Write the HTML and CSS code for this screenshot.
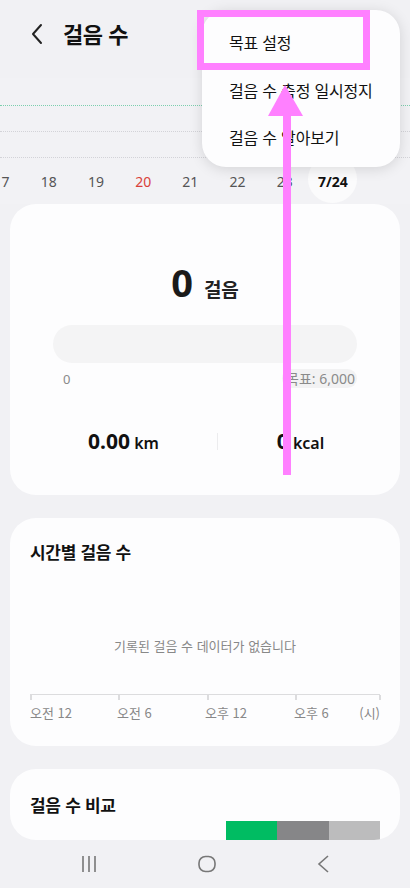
FILE: index.html
```html
<!DOCTYPE html>
<html lang="ko">
<head>
    <meta charset="UTF-8">
    <title>걸음 수</title>
    <link rel="stylesheet" href="styles.css">
</head>
<body>
<div class="page">
    <div class="header">
        <svg class="back" width="14" height="22" viewBox="0 0 14 22"><path d="M11 2 L3 11 L11 20" fill="none" stroke="#222" stroke-width="2" stroke-linecap="round" stroke-linejoin="round"/></svg>
        <h1 class="title">걸음 수</h1>
    </div>

    <div class="graph">
        <div class="line goal"></div>
        <div class="line"></div>
        <div class="line"></div>
    </div>

    <ul class="days">
        <li>17</li>
        <li>18</li>
        <li>19</li>
        <li class="sun">20</li>
        <li>21</li>
        <li>22</li>
        <li>23</li>
        <li class="today"><span>7/24</span></li>
    </ul>

    <div class="card summary">
        <div class="count"><b>0</b><span>걸음</span></div>
        <div class="bar"></div>
        <div class="bar-labels">
            <span>0</span>
            <span class="goal-pill">목표: 6,000</span>
        </div>
        <div class="stats">
            <div class="stat"><b>0.00</b> <span>km</span></div>
            <div class="sep"></div>
            <div class="stat"><b>0</b> <span>kcal</span></div>
        </div>
    </div>

    <div class="card hourly">
        <h2>시간별 걸음 수</h2>
        <p class="empty">기록된 걸음 수 데이터가 없습니다</p>
        <div class="axis">
            <i style="left:0"></i>
            <i style="left:88px"></i>
            <i style="left:177px"></i>
            <i style="left:265px"></i>
            <i style="left:349px"></i>
        </div>
        <div class="axis-labels">
            <span>오전 12</span>
            <span>오전 6</span>
            <span>오후 12</span>
            <span>오후 6</span>
            <span>(시)</span>
        </div>
    </div>

    <div class="card compare">
        <h2>걸음 수 비교</h2>
        <div class="legend">
            <span class="c1"></span><span class="c2"></span><span class="c3"></span>
        </div>
    </div>

    <div class="navbar">
        <svg width="18" height="18" viewBox="0 0 18 18"><path d="M3 1v16M9 1v16M15 1v16" stroke="#777" stroke-width="1.6"/></svg>
        <svg width="18" height="18" viewBox="0 0 18 18"><rect x="1" y="1.5" width="16" height="15" rx="6.5" fill="none" stroke="#777" stroke-width="1.6"/></svg>
        <svg width="14" height="20" viewBox="0 0 14 20"><path d="M12 2 L3 10 L12 18" fill="none" stroke="#777" stroke-width="1.6"/></svg>
    </div>

    <ul class="menu">
        <li>목표 설정</li>
        <li>걸음 수 측정 일시정지</li>
        <li>걸음 수 알아보기</li>
    </ul>

    <svg class="mark" width="410" height="888" viewBox="0 0 410 888">
        <rect x="200.5" y="13.5" width="166" height="53" fill="none" stroke="#ff80ff" stroke-width="7"/>
        <polygon points="285,85 303,116 268,116" fill="#ff80ff"/>
        <rect x="283" y="114" width="8" height="361" fill="#ff80ff"/>
    </svg>
</div>
</body>
</html>
```

FILE: styles.css
```css
body, h1, h2, p, ul, li {
    margin: 0;
    padding: 0;
}

ul {
    list-style: none;
}

body {
    font-family: "Noto Sans CJK KR", "Noto Sans", sans-serif;
    color: #111;
    background: #f1f1f4;
}

.page {
    width: 410px;
    height: 888px;
    position: relative;
    overflow: hidden;
}

.header {
    height: 78px;
    display: flex;
    align-items: center;
    padding: 0 0 12px 30px;
    box-sizing: border-box;
}

.back {
    margin-top: 2px;
}

.title {
    font-size: 22px;
    font-weight: 700;
    margin-left: 19px;
    letter-spacing: -0.5px;
}

.graph {
    height: 81px;
    padding-top: 27px;
    box-sizing: border-box;
    background: #f2f2f5;
}

.line {
    border-top: 1.5px dotted #d3d3d8;
    margin-bottom: 25px;
}

.line.goal {
    border-top-color: #7ccfae;
}

.days {
    display: flex;
    margin-left: -22px;
    height: 45px;
    align-items: center;
    font-family: "Noto Sans", sans-serif;
    background: #f2f2f5;
}

.days li {
    width: 47.2px;
    flex: none;
    text-align: center;
    font-size: 14px;
    color: #555;
}

.days .sun {
    color: #d9413a;
}

.days .today span {
    display: inline-flex;
    width: 49px;
    height: 48px;
    align-items: center;
    justify-content: center;
    margin-top: -6px;
    padding-top: 6px;
    box-sizing: border-box;
    border-radius: 50%;
    background: #fbfbfc;
    color: #111;
    font-weight: 700;
}

.card {
    margin: 0 10px;
    background: #fdfdfe;
    border-radius: 26px;
}

.summary {
    height: 291px;
    padding: 50px 43px 0;
    box-sizing: border-box;
}

.count {
    display: flex;
    justify-content: center;
    align-items: baseline;
    gap: 11px;
    height: 62px;
}

.count b {
    font-family: "Noto Sans", sans-serif;
    font-size: 38px;
    font-weight: 700;
    line-height: 56px;
    color: #1a1a1a;
}

.count span {
    font-size: 19px;
    font-weight: 700;
    color: #222;
}

.bar {
    height: 38px;
    margin-top: 9px;
    border-radius: 19px;
    background: #f4f4f5;
}

.bar-labels {
    display: flex;
    justify-content: space-between;
    align-items: center;
    margin-top: 6px;
    font-family: "Noto Sans", "Noto Sans CJK KR", sans-serif;
    font-size: 13px;
    color: #8a8a8a;
}

.bar-labels > span:first-child {
    padding-left: 10px;
}

.goal-pill {
    background: #f2f2f3;
    border-radius: 10px;
    padding: 0 2px 0 4px;
    line-height: 19px;
    font-size: 14px;
}

.stats {
    display: grid;
    grid-template-columns: 187px 1px 1fr;
    align-items: center;
    margin: 39px -26px 0 -23px;
}

.stat {
    text-align: center;
    font-family: "Noto Sans", sans-serif;
}

.stat b {
    font-size: 21px;
    font-weight: 700;
}

.stat span {
    font-size: 16px;
    font-weight: 600;
}

.sep {
    width: 1px;
    height: 17px;
    background: #ececee;
}

.hourly {
    margin-top: 23px;
    height: 228px;
    padding: 21px 20px 0;
    box-sizing: border-box;
}

h2 {
    font-size: 17px;
    font-weight: 700;
    letter-spacing: -0.3px;
}

.empty {
    text-align: center;
    font-size: 13px;
    color: #888;
    margin-top: 72px;
}

.axis {
    position: relative;
    margin-top: 39px;
    height: 5px;
    border-top: 1.5px solid #dcdcde;
}

.axis i {
    position: absolute;
    top: 0;
    width: 1.5px;
    height: 5px;
    background: #dcdcde;
}

.axis-labels {
    display: grid;
    grid-template-columns: 87px 88px 89px 1fr auto;
    margin-top: 3px;
    font-size: 13px;
    color: #888;
}

.compare {
    margin-top: 23px;
    height: 71px;
    padding: 23px 20px 0;
    box-sizing: border-box;
    overflow: hidden;
}

.legend {
    display: flex;
    justify-content: flex-end;
    margin-top: 4px;
}

.legend span {
    width: 51.5px;
    height: 23px;
}

.legend .c1 { background: #00bc62; }
.legend .c2 { background: #868688; }
.legend .c3 { background: #bcbcbd; }

.navbar {
    height: 48px;
    display: flex;
    justify-content: space-around;
    align-items: center;
    padding: 0 30px 0 30px;
    background: #f1f1f4;
}

.menu {
    position: absolute;
    left: 202px;
    top: 10px;
    width: 198px;
    height: 157px;
    padding-top: 9px;
    box-sizing: border-box;
    background: #fdfdfe;
    border-radius: 24px;
    box-shadow: 0 2px 14px rgba(0, 0, 0, 0.13);
}

.menu li {
    height: 47.5px;
    line-height: 47px;
    padding-left: 27px;
    font-size: 16px;
    color: #111;
    letter-spacing: -0.2px;
}

.mark {
    position: absolute;
    left: 0;
    top: 0;
}
```
